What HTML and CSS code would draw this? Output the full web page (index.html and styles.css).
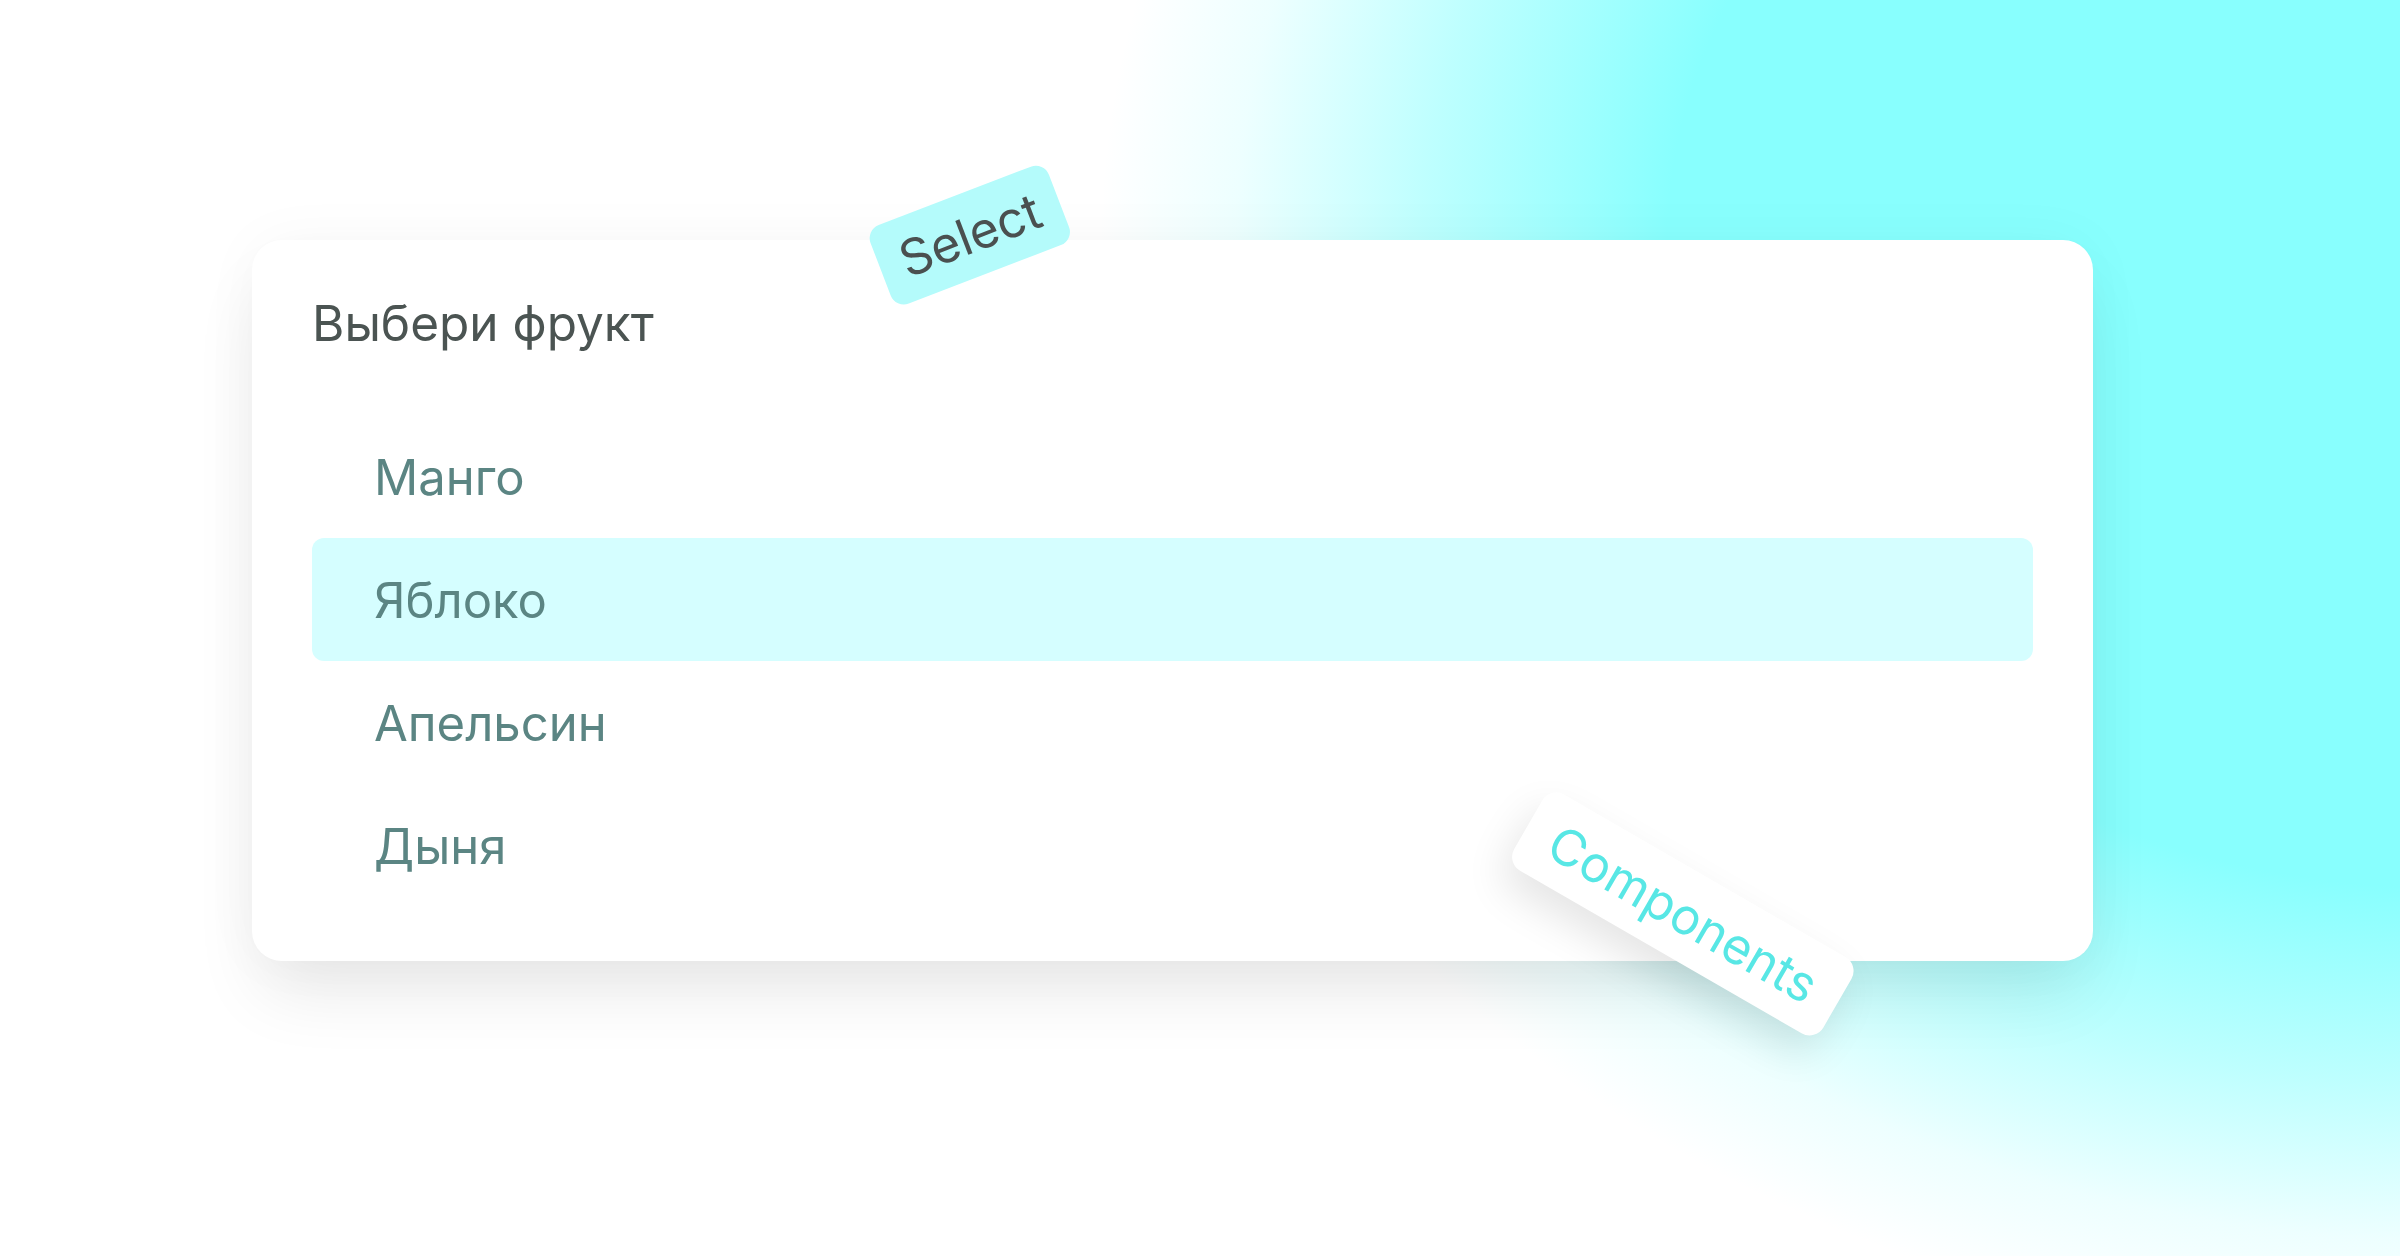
FILE: index.html
```html
<!DOCTYPE html>
<html lang="ru">
<head>
<meta charset="utf-8">
<title>Select</title>
<link rel="stylesheet" href="styles.css">
</head>
<body>
<main class="page">
  <section class="card">
    <h1 class="title">Выбери фрукт</h1>
    <ul class="options">
      <li class="option">Манго</li>
      <li class="option option--active">Яблоко</li>
      <li class="option">Апельсин</li>
      <li class="option">Дыня</li>
    </ul>
    <div class="tag-anchor tag-anchor--select"><span class="tag tag--select">Select</span></div>
    <div class="tag-anchor tag-anchor--components"><span class="tag tag--components">Components</span></div>
  </section>
</main>
</body>
</html>
```
FILE: styles.css
```css
html, body {
  margin: 0;
  padding: 0;
}

body {
  width: 2400px;
  height: 1256px;
  overflow: hidden;
  font-family: Inter, "Noto Sans", "Liberation Sans", sans-serif;
  background-color: #ffffff;
  background-image: radial-gradient(ellipse 1350px 1100px at 2450px 250px,
    #88fffe 0%,
    #88fffe 58%,
    rgba(136, 255, 254, 0.55) 76%,
    rgba(136, 255, 254, 0.15) 90%,
    rgba(136, 255, 254, 0) 100%);
}

.page {
  box-sizing: border-box;
  width: 2400px;
  height: 1256px;
  padding: 240px 0 0 252px;
}

.card {
  position: relative;
  box-sizing: border-box;
  width: 1841px;
  height: 721px;
  padding: 54px 60px 55px 60px;
  background: #ffffff;
  border-radius: 30px;
  box-shadow: 0 40px 70px -10px rgba(0, 0, 0, 0.09), 0 0 60px rgba(0, 0, 0, 0.035);
}

.title {
  margin: 0;
  font-size: 49.5px;
  font-weight: 400;
  line-height: 58px;
  color: #4b5452;
}

.options {
  list-style: none;
  margin: 63px 0 0 0;
  padding: 0;
}

.option {
  display: flex;
  align-items: center;
  box-sizing: border-box;
  height: 123px;
  padding: 3px 0 0 62px;
  font-size: 49px;
  line-height: 58px;
  color: #5b8583;
  border-radius: 12px;
}

.option--active {
  background: #d5feff;
}

.tag-anchor {
  position: absolute;
  width: 0;
  height: 0;
}

.tag-anchor--select {
  left: 718px;
  top: -5px;
}

.tag-anchor--components {
  left: 1431px;
  top: 674px;
}

.tag {
  position: absolute;
  left: 0;
  top: 0;
  display: block;
  white-space: nowrap;
  font-size: 50px;
  line-height: 58px;
  border-radius: 14px;
}

.tag--select {
  padding: 13px 22px;
  background: #b4fbfb;
  color: #4a5050;
  transform: translate(-50%, -50%) rotate(-21deg);
}

.tag--components {
  padding: 15px 28px;
  background: #ffffff;
  color: #58e7e5;
  border-radius: 16px;
  box-shadow: 0 20px 40px rgba(0, 0, 0, 0.1);
  transform: translate(-50%, -50%) rotate(30deg);
}
```
